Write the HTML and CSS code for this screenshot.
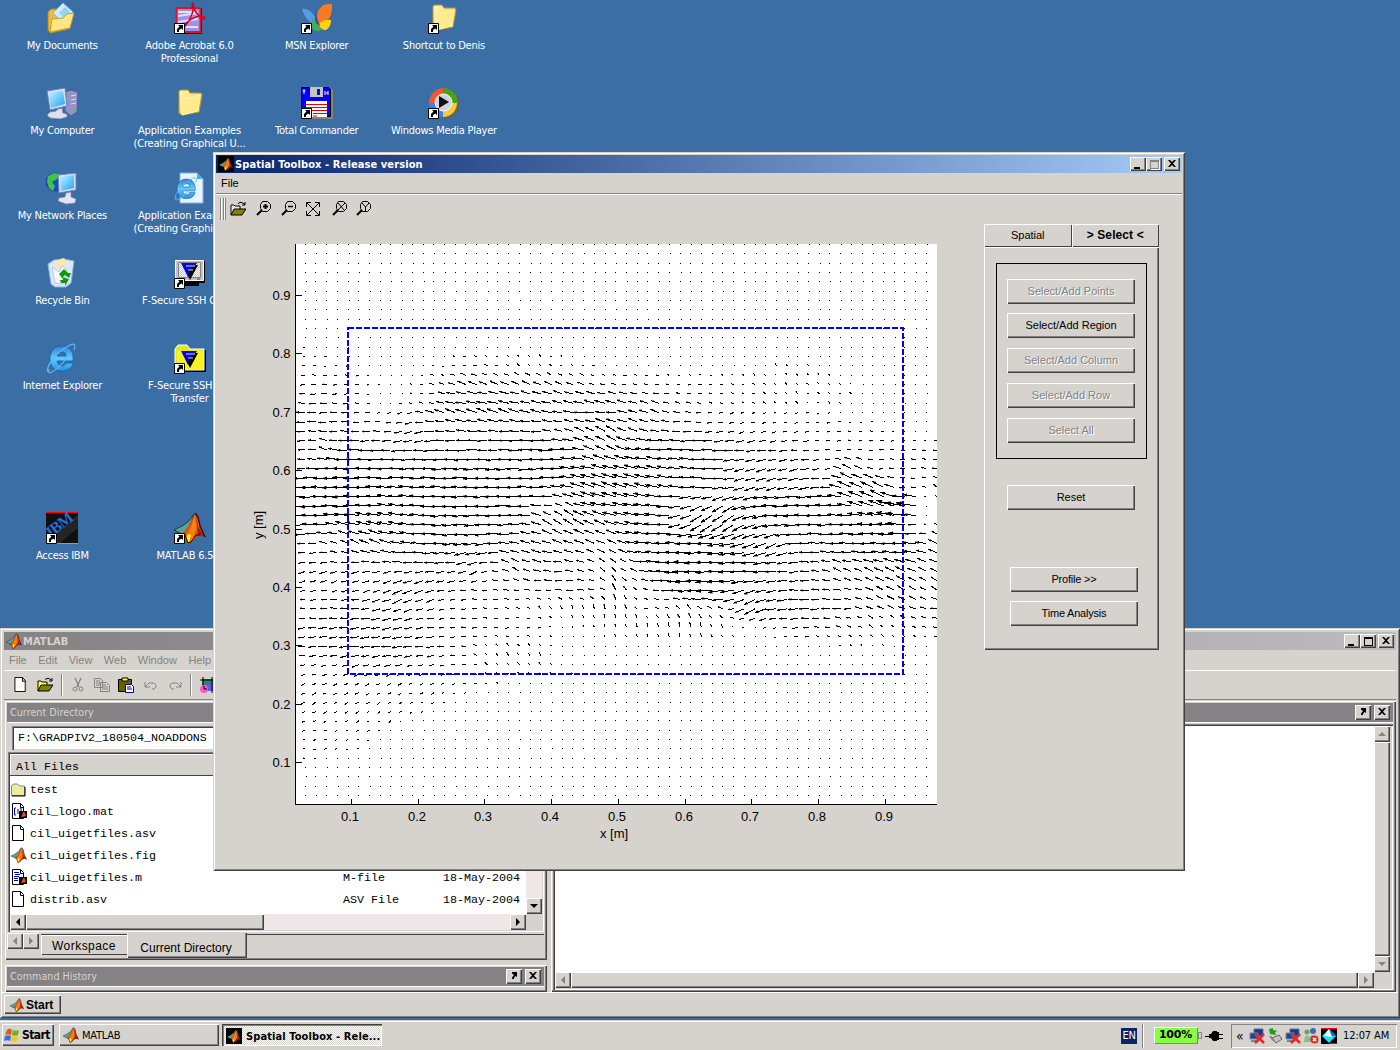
FILE: index.html
```html
<!DOCTYPE html>
<html lang="en">
<head>
<meta charset="utf-8">
<title>Desktop</title>
<link rel="stylesheet" href="styles.css">
</head>
<body>
<svg class="defs" width="0" height="0">
  <defs>
    <linearGradient id="flame" x1="0" y1="0" x2="1" y2="1"><stop offset="0" stop-color="#a51800"/><stop offset=".5" stop-color="#f76a10"/><stop offset="1" stop-color="#7b1000"/></linearGradient>
    <linearGradient id="paper" x1="0" y1="0" x2="1" y2="1"><stop offset="0" stop-color="#fff7b5"/><stop offset="1" stop-color="#efc342"/></linearGradient>
    <linearGradient id="glass" x1="0" y1="0" x2="1" y2="1"><stop offset="0" stop-color="#bdf3ff"/><stop offset="1" stop-color="#21a2f7"/></linearGradient>
    <linearGradient id="azure" x1="0" y1="0" x2="0" y2="1"><stop offset="0" stop-color="#2a86d8"/><stop offset=".5" stop-color="#63cbff"/><stop offset="1" stop-color="#2592e6"/></linearGradient>
    <pattern id="dither" width="2" height="2" patternUnits="userSpaceOnUse"><rect width="2" height="2" fill="#fff"/><path d="M0 0h1v1H0zM1 1h1v1H1z" fill="#ffff00"/></pattern>
    <pattern id="ditherGray" width="2" height="2" patternUnits="userSpaceOnUse"><rect width="2" height="2" fill="#fff"/><path d="M0 0h1v1H0zM1 1h1v1H1z" fill="#c6c3c6"/></pattern>
  </defs>
  <symbol id="matlab" viewBox="0 0 32 32">
    <path d="M0 18l8-4 7-5 5-7-4 12-5 7-3 1z" fill="#5aa294" stroke="#18413a"/>
    <path d="M9 21l4-5 3-5 5-9 2 2 3 11 5 10-5-2-4 3-8 6-3-8z" fill="url(#flame)"/>
    <path d="M21 2l-4 13-4 9 1 7 5-5 3-8z" fill="#f78210"/>
    <path d="M14 22l3 1-2 8-3-5z" fill="#ffef21"/>
    <path d="M22 3l2 11 5 10-5 -1z" fill="#a52008"/>
    <path d="M21 1l3 4 2 9 5 11" fill="none" stroke="#4a0800" stroke-width="1.5"/>
    <path d="M8 22l3 1 3 8 3-1 5-7 4 0" fill="none" stroke="#291008"/>
  </symbol>
  <symbol id="shortcut" viewBox="0 0 32 32">
    <path d="M.5 21.500h10v10H.5z" fill="#fff" stroke="#000"/>
    <path d="M4 23h5v5l-1.500-1.500L5 28v2H3v-3l2.500-2.500z" fill="#000"/>
  </symbol>
  <symbol id="folder" viewBox="0 0 32 32">
    <path d="M5 4l2-1h7l2 3h11l1 2-3 17-17 3-3-2z" fill="url(#paper)" stroke="#c69221"/>
    <path d="M8 12l18-4-2 16-16 4z" fill="#ffeb8c" stroke="#fff3b5"/>
  </symbol>
  <symbol id="e" viewBox="0 0 32 32">
    <path d="M16 4C8 4 4 10 4 17s4 12 12 12c6 0 10-3 11-8h-7c-1 2-2 3-4 3-3 0-4-2-5-5h16C28 10 24 4 16 4zm-5 10c1-3 2-4 5-4s4 1 4 4z" fill="url(#azure)" stroke="#1065b5" stroke-width=".8"/>
    <path d="M3 27C-1 37 16 25 23 12M2 30c-3-6 10-21 22-27 4-2 6-1 4 5" fill="none" stroke="#63b6ef" stroke-width="1.200"/>
  </symbol>
  <symbol id="screen" viewBox="0 0 32 32">
    <path d="M12 22l4-1 1 5 4 1v3l-7 2-10-1-3-3 3-3 6-1z" fill="#dedff0" stroke="#7b82a5" stroke-width=".8"/>
    <path d="M1 4l18-3 2 18-17 4z" fill="#d6dff7" stroke="#6b7db5"/><path d="M3 6l14-2 2 13-14 4z" fill="url(#glass)"/>
  </symbol>
  <symbol id="open" viewBox="0 0 16 16">
    <path d="M1 14V4h3l1 1h5v3" fill="url(#dither)" stroke="#000"/><path d="M1 14l3-6h12l-4 6z" fill="#848200" stroke="#000"/>
    <path d="M8 2.500l2-1h2l3 2M15 1v3h-3" fill="none" stroke="#000"/>
  </symbol>
  <symbol id="sheet" viewBox="0 0 16 16"><path d="M1.500.5h8l3 3v12h-11zM9.500.5v4h3" fill="#fff" stroke="#000"/></symbol>
  <symbol id="lens" viewBox="0 0 16 16"><path d="M6.500.5h5l3 3v4l-3 3h-5l-2-3v-4z" fill="none" stroke="#000"/><path d="M1 14l5-5" stroke="#000" stroke-width="2"/></symbol>
  <symbol id="net" viewBox="0 0 16 16">
    <path d="M5 1h9v7H5z" fill="#103c8c" stroke="#63718c"/><path d="M1 5h8v6H1z" fill="#18498c" stroke="#7b86a5"/><path d="M2 13h8" stroke="#848284" stroke-width="2"/>
    <path d="M6 6l9 9M15 6l-9 9" stroke="#e72829" stroke-width="2.600"/>
  </symbol>
  <symbol id="close" viewBox="0 0 10 10"><path d="M1 1h2l2 2 2-2h2L6 4.500 9 8H7L5 6 3 8H1l3-3.500z" fill="#000"/></symbol>
  <symbol id="undock" viewBox="0 0 10 10"><path d="M3 1h5v5L6.500 5 5 7v1H3V6.500L5 4 3 2.500z" fill="#000"/></symbol>
  <symbol id="fsecure" viewBox="0 0 32 32"><path d="M8 8l16 1-8 15z" fill="#000"/><path d="M7 7h16l-2 3h-8l6 1-2 3h-4l2 2-1 5z" fill="#0808e7"/><path d="M12 10h9M14 14h5" stroke="#c6dfff"/></symbol>
</svg>

<main class="desktop">
  <section class="icons">
    <figure class="ico r1 c1"><svg viewBox="0 0 32 32"><path d="M2 10l3-3h6l3 3 12 1-3 16-19 4-2-3z" fill="#efba39" stroke="#b58218"/><path d="M7 11l10-10 10 9-9 12z" fill="#c6efff" stroke="#84b6e7"/><path d="M13 11l6-6 5 5-6 6z" fill="#94d3f7"/><path d="M4 30l2-13 11-1 4-4 7-1-4 15z" fill="#ffe784" stroke="#ce9a29"/></svg><figcaption>My Documents</figcaption></figure>
    <figure class="ico r2 c1"><svg viewBox="0 0 32 32"><path d="M19 5l6-2 7 2-1 20-6 4-6-5z" fill="#9492c6" stroke="#5a5994"/><path d="M25 9l5-1M25 13l5-1M25 17l5-1" stroke="#dedff7"/><path d="M28 22h2v2h-2z" fill="#39db31"/><use href="#screen"/></svg><figcaption>My Computer</figcaption></figure>
    <figure class="ico r3 c1"><svg viewBox="0 0 32 32"><circle cx="9" cy="10" r="9.500" fill="#1849c6"/><path d="M2 4l6-3 6 1-3 5-5 3 3 4-2 5-4-3-2-6z" fill="#42c342"/><path d="M12 3l18-2v17l-17 3z" fill="#d6dff7" stroke="#6b7db5"/><path d="M14 5l14-2v13l-13 3z" fill="url(#glass)"/><path d="M20 21l5-1v5l5 2-1 4-9 1-8-3 1-3 6-1z" fill="#e7e3f7" stroke="#8486ad" stroke-width=".7"/></svg><figcaption>My Network Places</figcaption></figure>
    <figure class="ico r4 c1"><svg viewBox="0 0 32 32"><path d="M2 7l6-4 10-1 10 2-3 22-5 4H9l-4-3z" fill="#d6ebf7" stroke="#84b2d6"/><path d="M9 4l9-3 3 4-4 6-8-1z" fill="#ffe7ad"/><path d="M6 10l7 5 3-6 5 3-4 15-8-1z" fill="#f7f7ff" stroke="#b5aece" stroke-width=".7"/><path d="M13 17l5-5 4 4h3l-2 5-4-3-3 3zM14 23h3l-1-3 7 2-4 7v-3h-4z" fill="#109a10"/></svg><figcaption>Recycle Bin</figcaption></figure>
    <figure class="ico r5 c1"><svg viewBox="0 0 32 32"><use href="#e"/></svg><figcaption>Internet Explorer</figcaption></figure>
    <figure class="ico r7 c1"><svg viewBox="0 0 32 32"><path d="M0 0h32v32H0z" fill="#101010"/><path d="M32 2v14L13 32H0z" fill="#242424"/><path d="M0 .5h32" stroke="#f00"/><path d="M10 31.500h22" stroke="#21ef21"/><g transform="translate(5 26) rotate(-38)" class="ibm"><text>IBM</text></g><use href="#shortcut"/></svg><figcaption>Access IBM</figcaption></figure>

    <figure class="ico r1 c2"><svg viewBox="0 0 32 32"><path d="M3 6h25v26H3z" fill="#000"/><path d="M2.500 6h24v24h-24z" fill="#9c92e7" stroke="#e71021" stroke-width="2"/><path d="M4 10h20M4 14l20-3M4 20l20-3M4 25h20" stroke="#e7dfff" stroke-width="2"/><path d="M19 1c-3 2 2 8 7 14 4 3 6 2 4 0-4-3-13 1-19 7-6 7-3 7 1 1 5-6 9-17 7-22z" fill="none" stroke="#d6001c" stroke-width="1.500"/><use href="#shortcut"/></svg><figcaption>Adobe Acrobat 6.0 Professional</figcaption></figure>
    <figure class="ico r2 c2"><svg viewBox="0 0 32 32"><use href="#folder"/></svg><figcaption>Application Examples (Creating Graphical U...</figcaption></figure>
    <figure class="ico r3 c2"><svg viewBox="0 0 32 32"><path d="M6 1h17l6 6v24H6z" fill="#e7f3ff" stroke="#84b2de"/><path d="M23 1v6h6z" fill="#4aaae7"/><g transform="translate(0 4) scale(.78)"><use href="#e" width="32" height="32"/></g></svg><figcaption>Application Examples (Creating Graphical U...</figcaption></figure>
    <figure class="ico r4 c2"><svg viewBox="0 0 32 32"><path d="M3 4h28v22h-6v3H10v-3H3z" fill="#000"/><path d="M1.500 3.500h28v20h-28z" fill="#c6c3c6" stroke="#fff"/><path d="M4.500 5.500h22v15h-22z" fill="url(#ditherGray)" stroke="#848284"/><path d="M23 22h3" stroke="#e70000"/><g transform="translate(0 -1)"><use href="#fsecure" width="32" height="32"/></g><use href="#shortcut"/></svg><figcaption>F-Secure SSH Client</figcaption></figure>
    <figure class="ico r5 c2"><svg viewBox="0 0 32 32"><path d="M3 8h29v22H3z" fill="#000"/><path d="M1 28V7l3-4h9l3 4h14v21z" fill="#e7e329" stroke="#fff"/><path d="M3 9h26v18H3z" fill="url(#dither)" opacity=".4"/><g transform="translate(0 2)"><use href="#fsecure" width="32" height="32"/></g><use href="#shortcut"/></svg><figcaption>F-Secure SSH File Transfer</figcaption></figure>
    <figure class="ico r7 c2"><svg viewBox="0 0 32 32"><use href="#matlab"/><use href="#shortcut"/></svg><figcaption>MATLAB 6.5.1</figcaption></figure>

    <figure class="ico r1 c3"><svg viewBox="0 0 32 32"><path d="M1 7c6-1 12 4 15 12l1 3-4 0C7 20 3 14 1 7z" fill="#529ede"/><path d="M11 17c4-1 8 4 9 11-4 3-9-1-10-4z" fill="#42ae5a"/><path d="M31 2c-8-1-14 4-15 11-1 8 2 11 3 12 8-4 13-12 12-23z" fill="#f77921"/><path d="M18 22c4-5 8-4 12-4 0 6-3 9-5 10-4 0-6-2-7-6z" fill="#ffd310"/><path d="M16 10c-1 7 2 10 3 14-6-3-6-9-3-14z" fill="#4a4994"/><use href="#shortcut"/></svg><figcaption>MSN Explorer</figcaption></figure>
    <figure class="ico r2 c3"><svg viewBox="0 0 32 32"><path d="M3 2h29v30H3z" fill="#848284"/><path d="M.5.5h27l2 2v27H.5z" fill="#0000ff" stroke="#000"/><path d="M9 0h13v10H9z" fill="#c6c3c6"/><path d="M16 2h3v6h-3z" fill="#0018a5"/><path d="M5 14h21v16H5z" fill="#fff"/><path d="M5 17.500h21M5 20.500h21M5 23.500h21M12 26.500h14M12 29h4" stroke="#e70000"/><path d="M3 2v5M1.500 4h3M24 4v4M25 6h2M27 4v4" stroke="#fff"/><use href="#shortcut"/></svg><figcaption>Total Commander</figcaption></figure>
    <figure class="ico r1 c4"><svg viewBox="0 0 32 32"><use href="#folder"/><use href="#shortcut"/></svg><figcaption>Shortcut to Denis</figcaption></figure>
    <figure class="ico r2 c4"><svg viewBox="0 0 32 32"><circle cx="17" cy="17" r="14.500" fill="#636163"/><path d="M15 1v15H1A15 15 0 0 1 15 1z" fill="#ef5931"/><path d="M15 1v15h15A15 15 0 0 0 15 1z" fill="#4aa218"/><path d="M15 16v14a14 14 0 0 0 14-14z" fill="#f7cb31"/><path d="M15 16v14A14 14 0 0 1 1 16z" fill="#3982ef"/><circle cx="15.500" cy="15.500" r="8.500" fill="#ced3de" stroke="#fff"/><path d="M11 9l10 6-10 6z" fill="#101010"/><use href="#shortcut"/></svg><figcaption>Windows Media Player</figcaption></figure>
  </section>

  <section class="window matlab-window">
    <header class="titlebar inactive"><svg class="i16"><use href="#matlab"/></svg><b>MATLAB</b><span class="wbtns"><i class="wbtn"><u class="min"></u></i><i class="wbtn"><u class="max"></u></i><i class="wbtn last"><svg width="10" height="10"><use href="#close"/></svg></i></span></header>
    <nav class="menubar"><span>File</span><span>Edit</span><span>View</span><span>Web</span><span>Window</span><span>Help</span></nav>
    <div class="toolbar">
      <svg class="i16"><use href="#sheet" width="16" height="15"/></svg><svg class="i16"><use href="#open"/></svg><i class="sep"></i>
      <svg class="i16" viewBox="0 0 16 16"><path d="M5 1l4 9M11 1L7 10" stroke="#848284" fill="none" stroke-width="1.300"/><circle cx="5" cy="12" r="2" fill="none" stroke="#848284"/><circle cx="11" cy="12" r="2" fill="none" stroke="#848284"/></svg>
      <svg class="i16" viewBox="0 0 16 16"><path d="M.5 1.500h6l2 2v7h-8zM6.500 5.500h6l3 3v6h-9zM2 4h4M2 6h4M2 8h4M8 8h4M8 10h6M8 12h6" fill="none" stroke="#848284"/></svg>
      <svg class="i16" viewBox="0 0 16 16"><path d="M.5 2.500h13v12H.5z" fill="#636100" stroke="#000"/><path d="M4 1h6v3H4z" fill="#ffff52" stroke="#000"/><path d="M7.500 7.500h6l2 2v6h-8z" fill="#fff" stroke="#000084"/><path d="M9 10h4M9 12h5" stroke="#000084"/></svg>
      <svg class="i16" viewBox="0 0 16 16"><path d="M2 5v5h5M2 10l4-4h5l2 2v2l-2 2H9" fill="none" stroke="#848284"/></svg>
      <svg class="i16" viewBox="0 0 16 16"><path d="M14 5v5H9M14 10l-4-4H5L3 8v2l2 2h2" fill="none" stroke="#848284"/></svg>
      <i class="sep"></i>
      <svg class="i16" viewBox="0 0 16 16"><path d="M2 2h12v12H2z" fill="#31826b"/><path d="M6 7h9v7H6z" fill="#5a61d6"/><path d="M0 3h16M3 0v12M12 0v16" stroke="#000"/><circle cx="4" cy="12" r="4" fill="#ff59c6"/><path d="M4 9v3h3" stroke="#000" fill="none"/></svg>
    </div>
    <div class="docks">
      <div class="leftdock">
        <section class="panel dirpanel">
          <header class="ptitle">Current Directory</header>
          <div class="pathrow"><div class="path">F:\GRADPIV2_180504_NOADDONS</div></div>
          <div class="listbox">
            <div class="list">
              <div class="lhead">All Files</div>
              <div class="row"><svg class="i16" viewBox="0 0 16 16"><path d="M.5 14.500V5l2-2h4l2 2h5v9.500z" fill="#efeb9c" stroke="#848284"/><path d="M1 15h13V6" fill="none" stroke="#000"/></svg><span>test</span></div>
              <div class="row"><svg class="i16" viewBox="0 0 16 16"><use href="#sheet"/><path d="M5 5H3.500v7H5M7 6v5M9 5h1v3" stroke="#0000c6" fill="none"/><path d="M8 8h8v7H8z"/><path d="M10 14l3-6 2 5z" fill="#e75118"/></svg><span>cil_logo.mat</span></div>
              <div class="row"><svg class="i16"><use href="#sheet"/></svg><span>cil_uigetfiles.asv</span></div>
              <div class="row"><svg class="i16"><use href="#matlab"/></svg><span>cil_uigetfiles.fig</span></div>
              <div class="row"><svg class="i16" viewBox="0 0 16 16"><use href="#sheet"/><path d="M3 3.500h5M4 5.500h5M3 7.500h5M3 9.500h4M3 11.500h4" stroke="#0000c6"/><path d="M8 8h8v7H8z"/><path d="M10 14l3-6 2 5z" fill="#e75118"/></svg><span>cil_uigetfiles.m</span><span>M-file</span><span>18-May-2004</span></div>
              <div class="row"><svg class="i16"><use href="#sheet"/></svg><span>distrib.asv</span><span>ASV File</span><span>18-May-2004</span></div>
            </div>
            <div class="vscroll tint"><i class="sbtn"><u class="tri down"></u></i></div>
            <div class="hscroll tint"><i class="sbtn"><u class="tri left"></u></i><i class="thumb short"></i><i class="sbtn end"><u class="tri right"></u></i></div>
          </div>
          <div class="tabs"><i class="sbtn"><u class="tri left dim"></u></i><i class="sbtn"><u class="tri right dim"></u></i><span class="tab ws">Workspace</span><span class="tab cd">Current Directory</span><i class="tabline"></i></div>
        </section>
        <section class="panel histpanel"><header class="ptitle">Command History<span class="wbtns"><i class="pbtn"><svg width="10" height="10"><use href="#undock"/></svg></i><i class="pbtn"><svg width="10" height="10"><use href="#close"/></svg></i></span></header></section>
      </div>
      <section class="panel cmdpanel">
        <header class="ptitle"><span class="wbtns"><i class="pbtn"><svg width="10" height="10"><use href="#undock"/></svg></i><i class="pbtn"><svg width="10" height="10"><use href="#close"/></svg></i></span></header>
        <div class="cmdbox">
          <div class="cmdtext"></div>
          <div class="vscroll"><i class="sbtn"><u class="tri up dim"></u></i><i class="thumb"></i><i class="sbtn"><u class="tri down dim"></u></i></div>
          <div class="hscroll"><i class="sbtn"><u class="tri left dim"></u></i><i class="thumb"></i><i class="sbtn"><u class="tri right dim"></u></i></div>
        </div>
      </section>
    </div>
    <footer class="status"><span class="mstart btn"><svg width="14" height="14"><use href="#matlab"/></svg>Start</span></footer>
  </section>

  <section class="window tool-window">
    <header class="titlebar"><svg class="i16" viewBox="0 0 16 16"><path d="M0 0h16v16H0z"/><use href="#matlab" x="1" y="1" width="14" height="14"/></svg><b>Spatial Toolbox - Release version</b><span class="wbtns"><i class="wbtn"><u class="min"></u></i><i class="wbtn"><u class="max off"></u></i><i class="wbtn last"><svg width="10" height="10"><use href="#close"/></svg></i></span></header>
    <nav class="menubar"><span>File</span></nav>
    <div class="toolbar">
      <i class="grip"></i><svg class="i16"><use href="#open"/></svg>
      <svg class="i16 gap1"><use href="#lens"/><path d="M7 5.500h5M9.500 3v5" stroke="#000" stroke-width="2"/></svg>
      <svg class="i16"><use href="#lens"/><path d="M7 5.500h5" stroke="#000" stroke-width="1.500"/></svg>
      <svg class="i16 expand"><path d="M2 2l12 12M14 2L2 14M1.500 6V1.500H6M10 1.500h4.500V6M1.500 10v4.500H6M10 14.500h4.500V10" fill="none" stroke="#000"/></svg>
      <svg class="i16 gap2"><use href="#lens"/><path d="M6 2l6 7M13 2L6 9" stroke="#000"/></svg>
      <svg class="i16 near"><use href="#lens"/><path d="M6 2l3.500 4L13 2M9.500 6v4" fill="none" stroke="#000"/></svg>
    </div>
    <div class="figure">
      <svg id="plot" class="plot" viewBox="216 220 768 648" width="768" height="648"></svg>
      <aside class="side">
        <div class="sidetabs"><span class="btn">Spatial</span><span class="btn on">&gt; Select &lt;</span></div>
        <div class="sidebody">
          <div class="group"><span class="btn off">Select/Add Points</span><span class="btn second">Select/Add Region</span><span class="btn off">Select/Add Column</span><span class="btn off">Select/Add Row</span><span class="btn off">Select All</span></div>
          <span class="btn reset">Reset</span>
          <div class="actions"><span class="btn">Profile &gt;&gt;</span><span class="btn">Time Analysis</span></div>
        </div>
      </aside>
    </div>
  </section>
</main>

<footer class="taskbar">
  <span class="btn start"><svg width="16" height="16" viewBox="0 0 16 16"><path d="M3 3c2-2 4-1 5 0L7 8C5 7 3 7 1 8z" fill="#ef5121"/><path d="M9 3c2 1 4 1 6 0l-1 5c-2 1-4 1-6 0z" fill="#6bb610"/><path d="M1 9c2-1 4-1 6 0l-1 5c-2-1-4-1-6 0z" fill="#3171de"/><path d="M8 9c2 1 4 1 6 0l-1 5c-2 1-4 1-6 0z" fill="#ffc310"/></svg><b>Start</b></span>
  <span class="btn task"><svg class="i16"><use href="#matlab"/></svg>MATLAB</span>
  <span class="task active"><svg class="i16" viewBox="0 0 16 16"><path d="M0 0h16v16H0z"/><use href="#matlab" x="1" y="1" width="14" height="14"/></svg><b>Spatial Toolbox - Rele...</b></span>
  <span class="notify">
    <span class="lang">EN</span><i class="bar"></i><span class="battery">100%</span><i class="nub"></i>
    <svg class="plug" width="18" height="12" viewBox="0 0 18 12"><path d="M0 6h4V4h2l2-3h4v1h2v2h4v1h-4v3h4v1h-4v1h-2v1H8L6 8H4V7H0z"/></svg>
    <span class="tray"><em>«</em><svg class="i16"><use href="#net"/></svg><svg class="i16" viewBox="0 0 16 16"><path d="M5 10l7-3 3 4-6 4z" fill="#c6c3c6" stroke="#636163"/><path d="M2 1l1 5 6 1-1-3 3-1-5-1V0z" fill="#18a218"/><path d="M3 8l4 5" stroke="#848284" stroke-width="2"/></svg><svg class="i16"><use href="#net"/></svg><svg class="i16" viewBox="0 0 16 16"><circle cx="4" cy="4" r="2.500" fill="#63a263"/><circle cx="10" cy="3" r="3" fill="#3971a5"/><path d="M1 14c0-9 6-9 7 0z" fill="#8cbe8c"/><path d="M6 13c0-8 7-8 8 0z" fill="#7ba2c6"/><circle cx="11.500" cy="11.500" r="4" fill="#de3018"/><path d="M10 10l3 3M13 10l-3 3" stroke="#fff" stroke-width="1.500"/></svg><svg class="i16" viewBox="0 0 16 16"><path d="M0 0h16v16H0z"/><path d="M0 .5h16M9 15.500h7" stroke="#f00"/><path d="M8 1l7 7-7 7-7-7z" fill="#18e3ff"/><path d="M8 1l7 7H9z" fill="#1869ff"/><path d="M8 1L3 8l8 1z" fill="#fff"/></svg><time>12:07 AM</time></span>
  </span>
</footer>
<script src="quiver.js"></script>
</body>
</html>
```
FILE: styles.css
```css
* { box-sizing: border-box; }
body { margin: 0; width: 1400px; height: 1050px; overflow: hidden; display: flex; flex-direction: column; background: #3a6ea5; font: 11px/13px "DejaVu Sans Condensed", "DejaVu Sans", sans-serif; color: #000; letter-spacing: -0.25px; }
i, em { font-style: normal; }
u { text-decoration: none; }
b { letter-spacing: .1px; }
.defs { position: absolute; }
.i16 { width: 16px; height: 16px; flex: none; display: block; }
.desktop { position: relative; height: 1020px; }

/* desktop icons */
.icons { display: grid; grid-template-columns: repeat(4, 127.2px); grid-auto-rows: 85px; margin-left: -1.3px; padding-top: 2px; }
.ico { margin: 0; display: flex; flex-direction: column; align-items: center; gap: 5px; color: #fff; text-align: center; }
.ico svg { width: 32px; height: 32px; overflow: visible; flex: none; }
.ico figcaption { width: 120px; }
.r1 { grid-row: 1; } .r2 { grid-row: 2; } .r3 { grid-row: 3; } .r4 { grid-row: 4; } .r5 { grid-row: 5; } .r7 { grid-row: 7; }
.c1 { grid-column: 1; } .c2 { grid-column: 2; } .c3 { grid-column: 3; } .c4 { grid-column: 4; }
.ico.c2 { letter-spacing: -.18px; }
.ico.c2 svg { margin-left: 1px; }
.ibm { font: bold 16px "Liberation Serif", serif; fill: #2171d6; letter-spacing: -1px; }

/* windows */
.window { position: absolute; display: flex; flex-direction: column; background: #d6d3ce; box-shadow: inset 1px 1px #d6d3ce, inset -1px -1px #424142, inset 2px 2px #fff, inset -2px -2px #848284; }
.matlab-window { left: 0; top: 628px; width: 1400px; height: 390px; padding: 4px; }
.tool-window { left: 213px; top: 152px; width: 972px; height: 719px; padding: 3px; }
.titlebar { height: 18px; flex: none; display: flex; align-items: center; gap: 1px; padding: 0 2px; color: #fff; background: linear-gradient(90deg, #08246b, #a5cbf7); }
.titlebar.inactive { color: #d6d3ce; background: linear-gradient(90deg, #848284, #bdbabd); }
.wbtns { margin-left: auto; display: flex; }
.btn, .wbtn, .pbtn, .sbtn, .thumb { background: #d6d3ce; box-shadow: inset 1px 1px #fff, inset -1px -1px #424142, inset -2px -2px #848284; }
.wbtn { width: 16px; height: 14px; display: flex; align-items: center; justify-content: center; }
.wbtn.last { margin-left: 2px; }
.min { width: 6px; height: 2px; background: #000; margin: 7px 3px 0 0; }
.max { width: 9px; height: 9px; border: 1px solid #000; border-top-width: 2px; }
.max.off { border-color: #848284; box-shadow: 1px 1px #fff; }
.menubar { flex: none; display: flex; align-items: center; font: 11px/13px "Liberation Sans", sans-serif; }
.matlab-window .menubar { height: 21px; gap: 11.500px; padding: 1px 5px 0; color: #848284; border-bottom: 1px solid #fff; letter-spacing: 0; }
.tool-window .menubar { height: 21px; padding-left: 5px; border-bottom: 1px solid #848284; box-shadow: 0 1px #fff; letter-spacing: 0; }
.toolbar { flex: none; display: flex; align-items: center; }
.matlab-window .toolbar { height: 29px; gap: 8.300px; padding-left: 9px; border-bottom: 1px solid #848284; }
.sep { width: 2px; height: 22px; border-left: 1px solid #848284; border-right: 1px solid #fff; margin: 0 -1px; }
.tool-window .toolbar { height: 26px; gap: 9px; padding: 3px 0 0 4px; }
.gap1 { margin-left: 1px; }
.expand { margin-left: -1px; }
.gap2 { margin-left: 2px; }
.near { margin-left: -1px; }
.grip { width: 6px; height: 22px; margin-right: -5px; border: solid #848284; border-width: 0 1px; background: linear-gradient(90deg, #fff 1px, #d6d3ce 1px 2px, #848284 2px 3px, #fff 3px); }

/* docked panels */
.docks { display: flex; gap: 4px; padding: 1px 0 0 1px; height: 292px; }
.leftdock { width: 542px; flex: none; display: flex; flex-direction: column; gap: 5px; }
.panel { display: flex; flex-direction: column; padding: 2px 3px 2px 2px; box-shadow: inset 1px 1px #fff, inset -1px -1px #424142, inset -2px -2px #848284; }
.dirpanel { height: 259px; }
.histpanel { height: 28px; }
.cmdpanel { flex: 1; }
.ptitle { height: 19px; flex: none; display: flex; align-items: center; padding: 0 3px 1px; color: #d6d3ce; background: #848284; font: 9.600px/13px "DejaVu Sans", sans-serif; letter-spacing: .03px; box-shadow: 0 1px #fff; }
.ptitle .wbtns { gap: 3px; }
.pbtn { width: 16px; height: 15px; display: flex; align-items: center; justify-content: center; }
.pathrow { padding: 4px 0 2px 5px; height: 30px; }
.path, .list { font: 11.670px/14px "Liberation Mono", monospace; letter-spacing: 0; }
.path { height: 24px; padding: 5px 6px; background: #fff; box-shadow: inset 1px 1px #848284, inset 2px 2px #424142, inset 0 -1px #d6d3ce; white-space: nowrap; }
.listbox { margin-left: 1px; height: 180px; flex: none; padding: 2px 2px 1px 2px; display: grid; grid-template: 160px 17px / 1fr 16px; background: #d6d3ce; box-shadow: inset 1px 1px #848284, inset 2px 2px #424142, inset -1px -1px #fff; }
.list { background: #fff; overflow: hidden; }
.lhead { height: 22px; width: 530px; padding: 6px 6px 0; background: #d6d3ce; border-bottom: 1px solid #424142; box-shadow: inset 1px 1px #fff; margin-bottom: 2px; }
.row { display: grid; grid-template-columns: 16px 310px 97px 90px; column-gap: 3px; height: 22px; align-items: center; padding-left: 1px; white-space: pre; }
.row span { padding-top: 1px; }
.vscroll { display: flex; flex-direction: column; }
.hscroll { display: flex; height: 16px; }
.listbox .vscroll { justify-content: flex-end; }
.tint { background: #efe7e7; }
.sbtn { width: 16px; height: 16px; flex: none; display: flex; align-items: center; justify-content: center; }
.sbtn.end { margin-left: auto; }
.thumb { flex: 1; }
.thumb.short { flex: 0 0 238px; }
.tri { border: 4px solid transparent; width: 0; height: 0; }
.tri.down { border-top-color: #000; border-bottom: 0; }
.tri.up { border-bottom-color: #000; border-top: 0; }
.tri.left { border-right-color: #000; border-left: 0; }
.tri.right { border-left-color: #000; border-right: 0; }
.tri.down.dim { border-top-color: #848284; }
.tri.up.dim { border-bottom-color: #848284; }
.tri.left.dim { border-right-color: #848284; }
.tri.right.dim { border-left-color: #848284; }
.tabs { display: flex; align-items: flex-start; height: 26px; padding-top: 1px; font: 12px/14px "Liberation Sans", sans-serif; letter-spacing: 0; }
.tab { height: 21px; text-align: center; }
.ws { width: 86px; margin: 1px 0 0 2px; padding-top: 4px; border-top: 1px solid #424142; box-shadow: inset 1px 1px #fff, inset 0 -1px #424142; letter-spacing: .45px; }
.cd { width: 120px; height: 25px; padding: 8px 2px 0 0; box-shadow: inset 1px 0 #fff, inset -1px -1px #424142, inset -2px -2px #848284; }
.tabline { flex: 1; border-top: 1px solid #424142; margin-top: 1px; }
.cmdbox { margin-top: 2px; flex: 1; padding: 2px 3px 2px 2px; display: grid; grid-template: 1fr 16px / 1fr 16px; box-shadow: inset 1px 1px #848284, inset 2px 2px #424142, inset -1px -1px #fff; }
.cmdtext { background: #fff; }
.status { flex: 1; margin: 0 -2px; padding: 2px 2px 0; border-top: 1px solid #fff; }
.status .mstart { display: flex; justify-content: flex-start; width: 57px; height: 19px; gap: 2px; padding-left: 6px; font: bold 12px/14px "Liberation Sans", sans-serif; letter-spacing: 0; }

/* spatial toolbox */
.figure { flex: 1; display: flex; font: 11px/13px "Liberation Sans", sans-serif; letter-spacing: 0; }
.plot { flex: none; display: block; font: 13px "Liberation Sans", sans-serif; }
.side { width: 175px; padding-top: 4px; }
.sidetabs { display: flex; height: 23px; }
.btn { display: flex; align-items: center; justify-content: center; }
.sidetabs .btn { flex: 1; box-shadow: inset 1px 1px #fff, inset -1px -1px #424142; }
.sidetabs .on { font-weight: bold; font-size: 12px; letter-spacing: .1px; }
.sidebody { height: 403px; padding: 16px 12px 0; box-shadow: inset 1px 1px #fff, inset -1px -1px #424142, inset -2px -2px #848284; }
.group { width: 151px; height: 196px; border: 1px solid #000; padding: 15px 11px 0 10px; display: flex; flex-direction: column; gap: 10px; }
.group .btn, .reset { height: 25px; flex: none; }
.group .second { margin-top: -1px; }
.reset { width: 128px; margin: 26px 0 0 11px; }
.off { color: #848284; text-shadow: 1px 1px #fff; }
.actions { display: flex; flex-direction: column; gap: 9px; margin: 57px 0 0 14px; letter-spacing: -.2px; }
.actions .btn { width: 128px; height: 25px; }

/* taskbar */
.taskbar { height: 30px; background: #d6d3ce; box-shadow: inset 0 1px #d6d3ce, inset 0 2px #fff; display: flex; padding: 4px 2px 0; }
.taskbar .btn, .task { justify-content: flex-start; height: 22px; display: flex; align-items: center; }
.taskbar .start { width: 52px; padding-left: 2px; gap: 2px; margin-right: 5px; }
.start b { font-size: 12px; letter-spacing: -.6px; }
.task { width: 160px; padding-left: 4px; gap: 3px; margin-right: 3px; }
.taskbar .active { background: repeating-conic-gradient(#fff 0 25%, #d6d3ce 0 50%) 0 0 / 2px 2px; box-shadow: inset 1px 1px #424142, inset 2px 2px #848284, inset -1px -1px #fff; padding-top: 2px; gap: 4px; }
.notify { margin-left: auto; display: flex; align-items: center; height: 23px; }
.lang { width: 16px; height: 16px; background: #08246b; color: #fff; line-height: 16px; text-align: center; }
.bar { width: 2px; height: 24px; border-left: 1px solid #848284; border-right: 1px solid #fff; margin: 0 10px 0 5px; }
.battery { width: 43px; height: 16px; margin-top: -2px; background: #84ff42; box-shadow: inset 1px 1px #fff, 1px 1px #848284; font: bold 11px/15px "DejaVu Sans", sans-serif; letter-spacing: -.2px; text-align: center; }
.nub { width: 4px; height: 7px; border: 1px solid #848284; margin: 0 3px 0 1px; }
.tray { display: flex; align-items: center; gap: 2px; width: 166px; height: 24px; margin: 0 1px 0 8px; padding: 0 0 0 5px; box-shadow: inset 1px 1px #848284, inset -1px -1px #fff; }
.tray em { font-size: 14px; width: 11px; line-height: 16px; }
.tray time { margin-left: 4px; white-space: nowrap; letter-spacing: -.1px; }
```
FILE: quiver.js
```js
// Velocity samples: [y, [x, leftward, downward], ...] in plot pixels
const samples = [
  [244, [296, 1, 0], [940, 1, 0]],
  [335, [296, 1.5, .3], [500, 1.2, -.5], [940, 1, .5]],
  [365, [296, 3, 0], [400, 1, .5], [470, 3, -.5], [530, 2, -2], [640, 1.5, 0], [790, 1, -2], [940, 1, 0]],
  [385, [296, 5, 0], [350, 4, 0], [400, 1, 0], [430, 4, -1], [470, 8, -3], [560, 7, -3], [600, 5, -1], [700, 3, 0], [800, 2, -2], [940, 1, 0]],
  [402, [296, 7, 0], [350, 5, 0], [380, 1, 0], [430, 4, -1], [460, 10, -1], [550, 9, -2], [610, 10, -3], [650, 7, -2], [720, 3, -1], [800, 2, -2], [940, 1, 0]],
  [413, [296, 9, 0], [350, 6, 0], [380, 3, 0], [400, 4, 2], [440, 9, -3], [500, 10, -4], [600, 9, 0], [650, 8, -3], [720, 4, 1], [820, 2, 1], [940, 1, 0]],
  [430, [296, 8, 0], [350, 7, 0], [390, 6, 0], [410, 7, 3], [450, 9, -1], [540, 9, 0], [560, 7, -2], [610, 9, -5], [680, 7, 0], [750, 5, 2], [850, 3, 0], [940, 1, 0]],
  [448, [296, 7, 2], [325, 6, -3], [350, 10, 0], [400, 9, 1], [500, 9, 0], [560, 13, 0], [610, 8, -5], [650, 12, -1], [700, 11, 0], [760, 8, 1], [850, 4, 0], [940, 4, 0]],
  [470, [296, 6, 0], [350, 15, 0], [400, 12, 0], [500, 12, 1], [540, 11, 1], [600, 13, -3], [650, 12, -3], [700, 10, -1], [750, 9, 3], [800, 8, 2], [835, 5, 0], [850, 9, -5], [880, 5, 0], [940, 5, -1]],
  [490, [296, 15, 0], [350, 14, 0], [400, 13, -1], [500, 13, 0], [560, 11, -1], [590, 13, -5], [640, 13, -4], [700, 10, 0], [760, 10, 3], [825, 9, 1], [850, 13, -5], [890, 11, -6], [905, 6, 1], [940, 3, -3]],
  [505, [296, 15, 1], [350, 14, 0], [400, 12, -2], [450, 13, 1], [530, 12, 0], [550, 7, -1], [570, 6, -3], [600, 14, -3], [650, 13, -2], [690, 10, 3], [730, 10, 6], [770, 14, 0], [840, 13, -1], [880, 13, -6], [915, 20, -3], [925, 1, 0], [940, 1, 0]],
  [522, [296, 14, 1], [340, 12, -2], [390, 13, -3], [450, 12, 1], [520, 10, 0], [560, 8, -6], [610, 11, -4], [660, 13, -1], [685, 10, 3], [700, 10, 7], [735, 10, 7], [780, 13, 1], [850, 12, 0], [905, 18, -1], [920, 1, 0], [940, 2, -1]],
  [545, [296, 7, 1], [345, 6, -3], [380, 10, -4], [430, 11, 0], [480, 12, 2], [520, 9, -2], [580, 9, -3], [620, 7, -3], [650, 13, -1], [710, 15, 0], [740, 13, 3], [775, 10, 5], [810, 9, -1], [860, 11, 0], [915, 13, 0], [940, 8, -4]],
  [570, [296, 6, 2], [400, 7, 1], [450, 8, 1], [480, 6, 3], [515, 6, -4], [560, 8, 0], [615, 4, -4], [650, 8, -1], [690, 17, 1], [750, 13, 0], [800, 8, 1], [840, 7, -3], [900, 9, -4], [940, 6, -3]],
  [592, [296, 5, 1], [370, 6, 2], [410, 9, 4], [470, 5, 0], [580, 6, 0], [600, 6, -1], [615, 3, -6], [650, 4, -1], [675, 8, 1], [710, 15, 1], [750, 10, 4], [800, 8, 0], [850, 6, -1], [900, 7, -4], [940, 5, -3]],
  [608, [296, 5, 0], [345, 7, -1], [400, 8, 3], [450, 5, 1], [550, 2, -3], [620, 1, -5], [650, 4, 0], [690, 4, -4], [730, 5, -1], [750, 10, 6], [780, 10, 1], [850, 7, 0], [880, 6, -3], [940, 6, -1]],
  [626, [296, 6, 1], [345, 8, 1], [400, 8, 2], [450, 5, 0], [530, 3, 1], [570, 1, -2], [620, 1, -4], [690, 1, -6], [720, 2, -3], [760, 2, 1], [800, 6, 1], [830, 5, -1], [900, 3, -3], [940, 5, 0]],
  [648, [296, 6, 0], [345, 8, 1], [400, 9, 1], [450, 6, 1], [490, 2, -3], [530, 2, -3], [580, 1, 0], [690, 1, -1], [800, 1, -1], [870, 1, -2], [940, 1, 0]],
  [672, [296, 4, 1], [370, 5, 2], [440, 4, 1], [500, 2, -2], [540, 2, -2], [640, 1, 0], [940, 1, 0]],
  [700, [296, 4, 2], [380, 3, 2], [450, 1.8, 1], [550, 1, 0], [940, 1, 0]],
  [735, [296, 3, .5], [370, 2, 1], [420, 1, .5], [940, 1, 0]],
  [775, [296, 1.5, 0], [940, 1, 0]],
  [810, [296, 1, 0], [940, 1, 0]]
];

const mix = (a, b, t) => a + (b - a) * t;

function along(row, x) {
  const pts = row.slice(1);
  let i = 1;
  while (i < pts.length - 1 && pts[i][0] < x) i++;
  const a = pts[i - 1], b = pts[i];
  const t = Math.min(1, Math.max(0, (x - a[0]) / (b[0] - a[0])));
  return [mix(a[1], b[1], t), mix(a[2], b[2], t)];
}

function velocity(x, y) {
  let i = 1;
  while (i < samples.length - 1 && samples[i][0] < y) i++;
  const a = samples[i - 1], b = samples[i];
  const t = Math.min(1, Math.max(0, (y - a[0]) / (b[0] - a[0])));
  const p = along(a, x), q = along(b, x);
  return [-mix(p[0], q[0], t), mix(p[1], q[1], t)];
}

let shafts = '', heads = '', dots = '';
const f = n => n.toFixed(1);
for (let r = 0; r < 61; r++) {
  for (let c = 0; c < 61; c++) {
    const x = 305.2 + 10.71 * c, y = 244.5 + 9.34 * r;
    const wobble = Math.sin(c * 2.3 + r * 5.1) * .6;
    let [u, v] = velocity(x, y);
    const len = Math.hypot(u, v);
    if (len < 2) {
      dots += `M${Math.floor(x)} ${Math.floor(y)}h${wobble > .5 ? 2 : 1}v1h-1z`;
      continue;
    }
    const s = len > 6 ? 1.12 : 1;
    u *= s;
    v = v * s + wobble;
    const ex = x + u, ey = y + v;
    shafts += `M${f(x)} ${f(y)}L${f(ex)} ${f(ey)}`;
    const k = .3, w = .1;
    heads += `M${f(ex)} ${f(ey)}L${f(ex - u * k - v * w)} ${f(ey - v * k + u * w)}L${f(ex - u * k + v * w)} ${f(ey - v * k - u * w)}z`;
  }
}

let ticks = '', labels = '';
for (let n = 1; n < 10; n++) {
  const tx = Math.round(284.300 + 66.700 * n) + .5, ty = Math.round(820.8 - 58.450 * n) + .5;
  ticks += `M${tx} 805v-6M295 ${ty}h7`;
  labels += `<text x="${tx - 1.500}" y="821" text-anchor="middle">0.${n}</text><text x="290.500" y="${ty + 4}" text-anchor="end">0.${n}</text>`;
}

document.getElementById('plot').innerHTML = `
  <clipPath id="area"><rect x="296" y="244" width="641" height="561"/></clipPath>
  <rect x="296" y="244" width="641" height="561" fill="#fff"/>
  <g clip-path="url(#area)" shape-rendering="crispEdges">
    <path d="${dots}"/>
    <path d="${shafts}" stroke="#000" fill="none"/>
    <path d="${heads}" stroke="#000" stroke-width=".4"/>
  </g>
  <path d="M295.5 244v561M295 804.500h642${ticks}" stroke="#000" fill="none" shape-rendering="crispEdges"/>
  <path d="M348 328H903V674H348Z" fill="none" stroke="#00f" stroke-width="2" stroke-dasharray="6 2" shape-rendering="crispEdges"/>
  ${labels}
  <text x="614" y="838" text-anchor="middle">x [m]</text>
  <text transform="translate(263 525) rotate(-90)" text-anchor="middle">y [m]</text>`;
```
